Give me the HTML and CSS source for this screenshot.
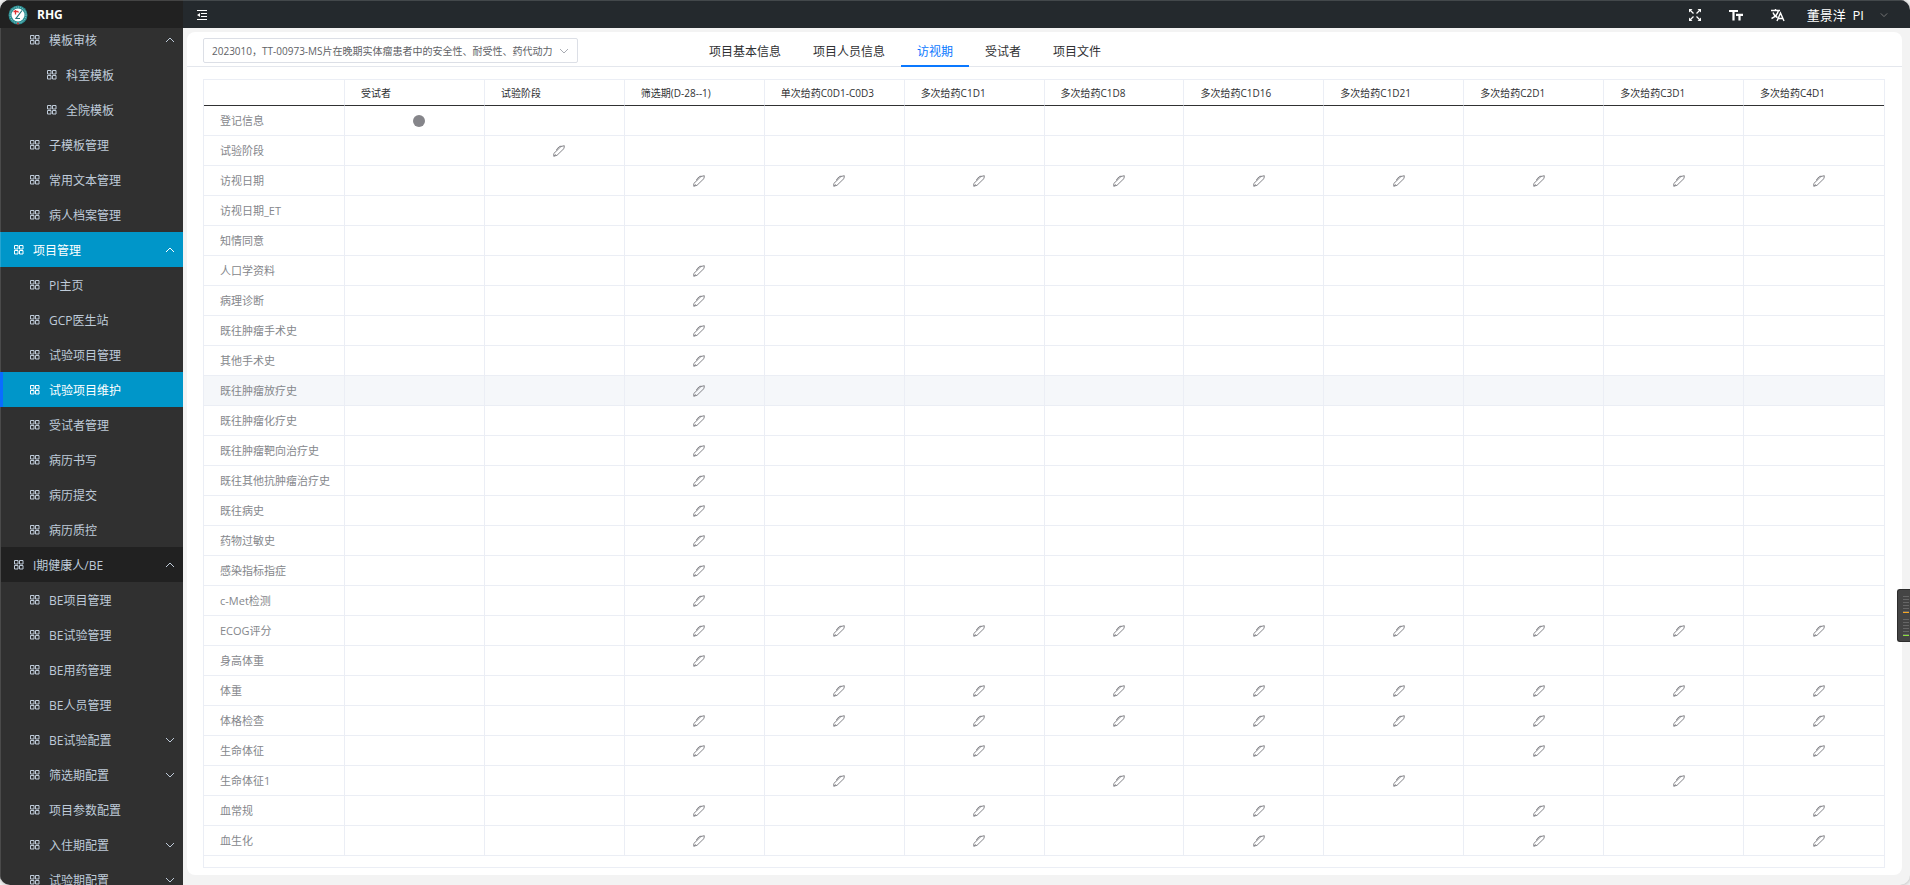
FILE: index.html
```
<!DOCTYPE html>
<html lang="zh-CN">
<head>
<meta charset="utf-8">
<title>RHG</title>
<link rel="stylesheet" href="styles.css">
</head>
<body>
<svg class="defs" aria-hidden="true">
  <symbol id="i-grid" viewBox="0 0 10 10"><path d="M.5.5h3.500v3.500H.5zM5.500.5h3.500v3.500H5.500zM.5 5.500h3.500v3.500H.5zM5.500 5.500h3.500v3.500H5.500z" fill="none" stroke="currentColor"/></symbol>
  <symbol id="i-down" viewBox="0 0 10 10"><path d="M1 3l4 4 4-4" fill="none" stroke="currentColor"/></symbol>
  <symbol id="i-up" viewBox="0 0 10 10"><path d="M1 7l4-4 4 4" fill="none" stroke="currentColor"/></symbol>
  <symbol id="i-pen" viewBox="0 0 12 12"><path d="M.8 11.200V8.500L8 1.500l3.300-.8-.3 2.800L4 10.300zM3.800 5.300V4l3-2.700h1.700M.8 11.200l2.200-1.700" fill="none" stroke="currentColor" stroke-linejoin="round"/></symbol>
</svg>
<div class="app">
  <aside class="side">
    <div class="brand">
      <svg class="logo" viewBox="0 0 20 20" aria-hidden="true"><circle cx="10" cy="10" r="9.500" fill="#2b8f93"/><circle cx="10" cy="10" r="8" fill="none" stroke="#9fcfce" stroke-dasharray="1 1.200"/><circle cx="10" cy="10" r="6.500" fill="#fff"/><path d="M5.500 6.500h4M7.500 5v4.500M9.500 6l1 1.500M9 18.500h2" stroke="#d33" fill="none" stroke-width="1.300"/><path d="M14 5.500L8 13.500h4" stroke="#27777c" fill="none" stroke-width="1.200"/></svg>
      <strong>RHG</strong>
    </div>
    <nav class="menu" id="menu" aria-label="主菜单"></nav>
  </aside>
  <div class="main">
    <header class="top">
      <button class="icon" aria-label="折叠菜单"><svg width="10" height="10" viewBox="0 0 10 10"><path d="M0 .5h10M4 3.500h6M4 6.500h6M0 9.500h10" stroke="currentColor" stroke-width="1" fill="none"/><path d="M0 5l3-2v4z" fill="currentColor"/></svg></button>
      <div class="tools">
        <button class="icon" aria-label="全屏"><svg width="12" height="12" viewBox="0 0 12 12"><path d="M0 0h3.500L0 3.500zM12 0v3.500L8.500 0zM0 12V8.500L3.500 12zM12 12H8.500L12 8.500z" fill="currentColor"/><path d="M1 1l3.500 3.500M11 1L7.500 4.500M1 11l3.500-3.500M11 11L7.500 7.500" stroke="currentColor" stroke-width="1.300"/></svg></button>
        <button class="icon" aria-label="字号"><svg width="14" height="12" viewBox="0 0 14 12"><path d="M0 2h9M4.500 2v9.500M7 5.800h7M10.500 5.500v6" stroke="currentColor" stroke-width="2.200" fill="none"/></svg></button>
        <button class="icon" aria-label="语言"><svg width="14" height="14" viewBox="0 0 14 14"><path d="M0 2.500h9M4.500 1v1.500M7.500 2.500C6.500 6 4 9 .5 10.500M2 4.500C3 7 5 9 6.500 9.500M6 13L9.500 5l3.500 8M7.500 10.500h4" stroke="currentColor" stroke-width="1.400" fill="none"/></svg></button>
        <button class="user">董景洋&nbsp; PI<svg class="chev" aria-hidden="true"><use href="#i-down"/></svg></button>
      </div>
    </header>
    <main class="card">
      <div class="bar">
        <select class="project" aria-label="项目"><option>2023010，TT-00973-MS片在晚期实体瘤患者中的安全性、耐受性、药代动力学</option></select>
        <nav class="tabs" aria-label="项目信息">
          <a href="#">项目基本信息</a><a href="#">项目人员信息</a><a href="#" class="on" aria-current="page">访视期</a><a href="#">受试者</a><a href="#">项目文件</a>
        </nav>
      </div>
      <div class="wrap">
        <table><thead><tr id="head"></tr></thead><tbody id="rows"></tbody></table>
      </div>
    </main>
  </div>
</div>
<div class="meter" aria-hidden="true"><i></i><i class="green"></i></div>
<script src="app.js"></script>
</body>
</html>
```
FILE: styles.css
```
* { box-sizing: border-box; }
body {
  margin: 0;
  background: #f3f3f3;
  font-family: "Open Sans", "Noto Sans CJK SC", sans-serif;
  font-size: 12px;
}
button { border: 0; background: none; color: inherit; font: inherit; padding: 0; }
a { color: inherit; text-decoration: none; }
.defs { position: absolute; width: 0; height: 0; }
.app { display: flex; height: 100vh; overflow: hidden; border-radius: 10px; box-shadow: 0 0 4px #aaa; background: #f3f3f3; }

.side { display: flex; flex-direction: column; flex: 0 0 183px; background: #303030; color: #bfcbd9; }
.brand { display: flex; align-items: center; gap: 9px; flex: 0 0 28px; padding-left: 8px; background: #212121; border-top: 1px solid #444; color: #fff; z-index: 1; }
.logo { width: 20px; height: 20px; }
.menu { flex: 1; min-height: 0; margin-top: -6px; overflow: hidden; }
.menu a { display: flex; align-items: center; gap: 9px; height: 35px; padding: 0 8px 0 29px; border-left: 1px solid #4a4a4a; }
.menu a.root { padding-left: 13px; }
.menu a.deep { padding-left: 46px; }
.menu a.dark { background: #212121; }
.menu a.hot { background: #0096c9; border-color: #26a5d1; color: #fff; }
.menu a.cur { border-left: 3px solid #0a6cff; padding-left: 27px; }
.menu span { flex: 1; }
.glyph { width: 10px; height: 10px; }
.chev { width: 10px; height: 10px; }

.main { display: flex; flex-direction: column; flex: 1; min-width: 0; }
.top { display: flex; align-items: center; justify-content: space-between; flex: 0 0 28px; padding: 0 22px 0 14px; background: #24292d; border-top: 1px solid #43484b; color: #fff; }
.icon { display: flex; }
.tools { display: flex; align-items: center; gap: 28px; }
.user { display: flex; align-items: center; gap: 16px; font-size: 13px; margin-left: -6px; }
.user .chev { width: 8px; height: 8px; color: #888; }

.card { display: flex; flex-direction: column; flex: 1; margin: 4px 8px 10px 4px; background: #fff; border-radius: 8px; }
.bar { display: flex; align-items: flex-start; flex: 0 0 35px; border-bottom: 1px solid #e4e7ed; padding: 6px 16px 0; }
.project {
  width: 375px; height: 25px; border: 1px solid #dcdfe6; border-radius: 2px; padding: 0 25px 0 8px;
  appearance: none; color: #606266; font: inherit; font-size: 10px;
  background: #fff url("data:image/svg+xml,%3Csvg xmlns='http://www.w3.org/2000/svg' viewBox='0 0 10 10'%3E%3Cpath d='M1 3l4 4 4-4' fill='none' stroke='%23a8abb2'/%3E%3C/svg%3E") no-repeat right 8px center / 10px 10px;
}
.tabs { display: flex; margin: 0 0 -1px 115px; color: #303133; }
.tabs a { height: 29px; padding: 0 16px; line-height: 27px; border-bottom: 2px solid transparent; }
.tabs a.on { color: #0a78ff; border-color: #0a78ff; }

.wrap { flex: 1; margin: 12px 17px 7px 16px; border: 1px solid #ebeef5; }
table { width: 100%; border-collapse: separate; border-spacing: 0; table-layout: fixed; }
th, td { height: 30px; padding: 0 6px 0 16px; border-right: 1px solid #ebeef5; border-bottom: 1px solid #ebeef5; font-weight: 400; line-height: 16px; }
th:first-child { width: 141px; }
th:last-child, td:last-child { border-right: 0; }
thead th { height: 26px; border-bottom-color: #303133; color: #303133; font-size: 10px; text-align: left; }
tbody th { padding-right: 0; color: #85878c; font-size: 11px; text-align: left; white-space: nowrap; }
td { color: #85858a; text-align: center; }
td svg { display: block; width: 12px; height: 12px; margin: 0 auto; }
tr.hover { background: #f5f7fa; }
.dot { display: block; width: 12px; height: 12px; margin: 0 auto; border-radius: 50%; background: #85858a; }

.meter { position: fixed; right: 0; top: 589px; display: flex; flex-direction: column; gap: 6px; width: 13px; height: 53px; padding: 6px 1px 5px 5px; background: #444; border: 1px solid #2c2c2c; border-right: 0; border-radius: 3px 0 0 3px; }
.meter i { flex: 1; border-bottom: 1px solid #f5a623; background: repeating-linear-gradient(#666 0 1px, #444 1px 3px); }
.meter .green { border-color: #8be03c; }
```
FILE: app.js
```
// label, level (deep | root | ""), state, arrow
const menu = [
  ["模板审核", "", "up"], ["科室模板", "deep"], ["全院模板", "deep"], ["子模板管理", ""], ["常用文本管理", ""], ["病人档案管理", ""],
  ["项目管理", "root hot", "up"], ["PI主页", ""], ["GCP医生站", ""], ["试验项目管理", ""], ["试验项目维护", "hot cur"],
  ["受试者管理", ""], ["病历书写", ""], ["病历提交", ""], ["病历质控", ""],
  ["I期健康人/BE", "root dark", "up"], ["BE项目管理", ""], ["BE试验管理", ""], ["BE用药管理", ""], ["BE人员管理", ""],
  ["BE试验配置", "", "down"], ["筛选期配置", "", "down"], ["项目参数配置", ""], ["入住期配置", "", "down"], ["试验期配置", "", "down"]
];
document.getElementById("menu").innerHTML = menu.map(([label, cls, arrow]) =>
  `<a href="#" class="${cls}"><svg class="glyph" aria-hidden="true"><use href="#i-grid"/></svg><span>${label}</span>${arrow ? `<svg class="chev" aria-hidden="true"><use href="#i-${arrow}"/></svg>` : ""}</a>`
).join("");

const columns = ["", "受试者", "试验阶段", "筛选期(D-28--1)", "单次给药C0D1-C0D3", "多次给药C1D1", "多次给药C1D8", "多次给药C1D16", "多次给药C1D21", "多次给药C2D1", "多次给药C3D1", "多次给药C4D1"];
document.getElementById("head").innerHTML = columns.map(c => `<th scope="col">${c}</th>`).join("");

// one mark per visit column: o = dot, x = form, . = none
const one = "..x........";
const rows = [
  ["登记信息", "o.........."], ["试验阶段", ".x........."], ["访视日期", "..xxxxxxxxx"], ["访视日期_ET", "..........."], ["知情同意", "..........."],
  ["人口学资料", one], ["病理诊断", one], ["既往肿瘤手术史", one], ["其他手术史", one], ["既往肿瘤放疗史", one], ["既往肿瘤化疗史", one],
  ["既往肿瘤靶向治疗史", one], ["既往其他抗肿瘤治疗史", one], ["既往病史", one], ["药物过敏史", one], ["感染指标指症", one], ["c-Met检测", one],
  ["ECOG评分", "..xxxxxxxxx"], ["身高体重", one], ["体重", "...xxxxxxxx"], ["体格检查", "..xxxxxxxxx"],
  ["生命体征", "..x.x.x.x.x"], ["生命体征1", "...x.x.x.x."], ["血常规", "..x.x.x.x.x"], ["血生化", "..x.x.x.x.x"]
];
const mark = { o: '<span class="dot"></span>', x: '<svg aria-hidden="true"><use href="#i-pen"/></svg>', ".": "" };
document.getElementById("rows").innerHTML = rows.map(([label, marks], i) =>
  `<tr class="${i === 9 ? "hover" : ""}"><th scope="row">${label}</th>${[...marks].map(m => `<td>${mark[m]}</td>`).join("")}</tr>`
).join("");
```
